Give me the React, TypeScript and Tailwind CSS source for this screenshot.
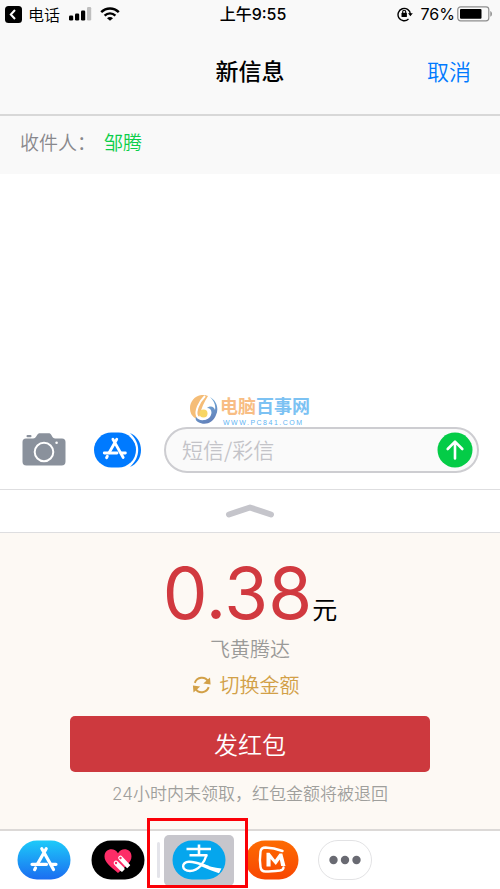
import type { ReactNode } from "react";

function SignalIcon() {
  return (
    <svg width="24" height="14" viewBox="0 0 24 14" aria-hidden="true">
      <rect x="1" y="8.500" width="4.200" height="5" rx="1.200" />
      <rect x="7" y="6.500" width="4.200" height="7" rx="1.200" />
      <rect x="13" y="3.500" width="4.200" height="10" rx="1.200" />
      <rect x="19" y="0" width="4.200" height="13.500" rx="1.200" fill="#bfbfbf" />
    </svg>
  );
}

function WifiIcon() {
  return (
    <svg width="20" height="14" viewBox="0 0 20 14" fill="none" stroke="#000" strokeWidth="2.4" aria-hidden="true">
      <path d="M1.2 5.2C6.2.2 13.8.2 18.8 5.2" />
      <path d="M4.6 8.6c3.1-3 7.700-3 10.800 0" />
      <path d="M7 11.200c1.800-1.700 4.200-1.700 6 0l-3 2.600z" fill="#000" stroke="none" />
    </svg>
  );
}

function RotationLockIcon() {
  return (
    <svg width="16" height="16" viewBox="0 0 16 16" fill="none" aria-hidden="true">
      <path d="M11.500 13.100A6.200 6.200 0 1 1 13.400 8" stroke="#000" strokeWidth="1.400" />
      <path d="M11 7.200h4.800L13.400 10.300z" fill="#000" />
      <rect x="4.500" y="6.800" width="5.400" height="4.200" rx=".6" fill="#000" />
      <path d="M5.700 7V5.800a1.500 1.500 0 0 1 3 0V7" stroke="#000" strokeWidth="1.100" />
    </svg>
  );
}

function BatteryIcon() {
  return (
    <svg width="36" height="16" viewBox="0 0 36 16" aria-hidden="true">
      <rect x=".8" y=".8" width="31" height="14" rx="2.800" fill="none" stroke="#8e8e8e" strokeWidth="1.200" />
      <rect x="3" y="3" width="21.500" height="9.800" rx="1" />
      <path d="M33.300 5c2.200.8 2.200 5 0 5.800z" fill="#8e8e8e" />
    </svg>
  );
}

function CameraIcon() {
  return (
    <svg width="44" height="34" viewBox="0 0 44 34" aria-hidden="true">
      <path
        d="M4 5.500h7c2 0 2.500-1 3.500-2.500C16 .8 16.500.3 18 .3h8.500c1.500 0 2.200.6 3.300 2.500 1 2 1.500 2.700 3.500 2.700H40c2.400 0 3.500 1.200 3.500 3.500V28.500c0 2.700-1.200 4-4 4H4.500c-2.800 0-4-1.300-4-4V9C.5 6.700 1.600 5.500 4 5.500z"
        fill="#8a919c"
      />
      <rect x="4.500" y="2" width="5" height="2.200" rx="1" fill="#8a919c" />
      <circle cx="22" cy="19" r="9.300" fill="none" stroke="#fff" strokeWidth="2" />
      <circle cx="34.600" cy="9.800" r="1.300" fill="#fff" />
    </svg>
  );
}

function AppStoreGlyph() {
  return (
    <g fill="none" stroke="#fff" strokeLinecap="round" strokeWidth="3.200">
      <path d="M11.800 1.200 14 5M16.200 1.200 7.500 16.500M14 5l9.500 17" />
      <path d="M2 16.800h14.500M21 16.800h5" />
      <path d="m5.500 20.500-.9 1.700" />
    </g>
  );
}

function MessageAppsIcon() {
  return (
    <svg width="48" height="36" viewBox="0 0 48 36" aria-hidden="true">
      <path d="M36 1c7 3 11 9.500 11 17s-4 14-11 17c11-10 11-24 0-34z" fill="#007aff" />
      <rect x="0" y="0" width="43" height="36" rx="18" fill="#fff" />
      <rect x="0" y=".5" width="42" height="35" rx="17.500" fill="#007aff" />
      <g transform="translate(8.500 6.200) scale(.88)">
        <AppStoreGlyph />
      </g>
    </svg>
  );
}

function SwitchIcon() {
  return (
    <svg width="20" height="18" viewBox="0 0 20 18" fill="none" aria-hidden="true">
      <path d="M2.800 6.800C5 .8 13 0 16 5.200M16.700 11.200C14.500 17.200 6.500 18 3.500 12.800" stroke="#d2a047" strokeWidth="2" />
      <path d="M11.300 7.400 18.600 8.600 18 1.600zM8.200 10.600.9 9.400l.6 7z" fill="#d2a047" />
    </svg>
  );
}

function AppStoreApp() {
  return (
    <svg width="54" height="40" viewBox="0 0 54 40" aria-hidden="true">
      <defs>
        <linearGradient id="store" x1="0" y1="0" x2="0" y2="1">
          <stop offset="0" stopColor="#1dcaf9" />
          <stop offset="1" stopColor="#1b6df1" />
        </linearGradient>
      </defs>
      <rect x=".5" y=".5" width="53" height="39" rx="19.500" fill="url(#store)" />
      <g transform="translate(13 7.500)">
        <AppStoreGlyph />
      </g>
    </svg>
  );
}

function DigitalTouchApp() {
  return (
    <svg width="54" height="40" viewBox="0 0 54 40" aria-hidden="true">
      <rect x=".5" y=".5" width="53" height="39" rx="19.500" />
      <path d="M27 33C20 27 13.500 22.500 13.500 16.500c0-8 10-9.500 13.500-3.300 3.500-6.200 13.500-4.700 13.500 3.300C40.500 22.500 34 27 27 33z" fill="#fd2d67" />
      <path d="m29.500 18 8 8.500M25 23l6.500 6.500" stroke="#fff" strokeWidth="4.600" strokeLinecap="round" />
      <path d="m35 29.500 5-5 3 3-5 5zM29.500 33.500l5-5 2 3-4 4z" fill="#000" />
      <circle cx="29.500" cy="18" r="1.200" fill="#fd2d67" />
      <circle cx="25" cy="23" r="1.200" fill="#fd2d67" />
    </svg>
  );
}

function AlipayApp() {
  return (
    <svg width="54" height="40" viewBox="0 0 54 40" aria-hidden="true">
      <defs>
        <clipPath id="alipay">
          <rect x=".5" y=".5" width="53" height="39" rx="19.500" />
        </clipPath>
      </defs>
      <g clipPath="url(#alipay)" fill="none" stroke="#fff">
        <rect width="54" height="40" fill="#05a6ed" stroke="none" />
        <path d="M14.500 9h24.500M17.500 15.200h18M27 4.500v11" strokeWidth="2.600" />
        <path d="M34.500 15C32.500 22.500 26.500 31 18 31c-9 0-9-9.200-1-9.200 7 0 13.500 3 19.500 5.200" strokeWidth="2.400" />
        <path d="M30 23.800c6 2.300 12 4 19.500 4.800L47 33.300C41 31.300 35 29 29 26.300z" fill="#fff" stroke="none" />
      </g>
    </svg>
  );
}

function MangoApp() {
  return (
    <svg width="54" height="40" viewBox="0 0 54 40" aria-hidden="true">
      <defs>
        <linearGradient id="mango" x1="0" y1="0" x2="0" y2="1">
          <stop offset="0" stopColor="#fd6b02" />
          <stop offset="1" stopColor="#f84702" />
        </linearGradient>
      </defs>
      <rect x=".5" y=".5" width="53" height="39" rx="19.500" fill="url(#mango)" />
      <path
        d="M37.500 11C32 9 26.500 7.800 20.500 7.500c-3 0-4.500 1-5 4-.8 6-.8 10.500 0 15.500.4 3 2 4.500 5 4.500 5 0 10-.5 14.500-1 2.500-.4 3.500-1.500 3.500-3"
        fill="none"
        stroke="#fff"
        strokeWidth="2.400"
        strokeLinecap="round"
      />
      <path d="M21.500 12.800h3l5.500 7 4.500-6.300h2.800L40.500 26h-4.300l-1.400-6.500-4 5.500-5.200-6v7.500h-4.100z" fill="#fff" />
    </svg>
  );
}

function MoreApp() {
  return (
    <svg width="54" height="40" viewBox="0 0 54 40" aria-hidden="true">
      <rect x=".5" y=".5" width="53" height="39" rx="19.500" fill="#fff" stroke="#e2e2e4" />
      <g fill="#696a72">
        <circle cx="15.500" cy="20" r="4.200" />
        <circle cx="27" cy="20" r="4.200" />
        <circle cx="38.500" cy="20" r="4.200" />
      </g>
    </svg>
  );
}

function Watermark() {
  return (
    <div className="absolute -top-[35px] left-[190px] flex items-center gap-[2px]">
      <svg width="28" height="30" viewBox="0 0 28 30" aria-hidden="true">
        <defs>
          <linearGradient id="ring" x1="0" y1="0" x2=".4" y2="1">
            <stop offset="0" stopColor="#75b9e4" />
            <stop offset="1" stopColor="#6382bb" />
          </linearGradient>
        </defs>
        <path d="M15 0C6-1 0 6 0 13c0 5 2 8 5 10 2 1 4 0 5-3 1-6 4-13 8-19z" fill="#f5bd77" />
        <path d="M20 2c7 4 9 12 6 18-3 8-11 11-18 7-2-1-3-3-2-5 3 3 9 4 13 1 4-4 3-10-2-10 4-3 7-1 8 2 1-5-1-9-5-13z" fill="url(#ring)" />
        <path d="M15 1C9 7 5 16 7 21c3 5 11 4 12-2 0-4-4-6-7-3" fill="none" stroke="#fff" strokeWidth="2" />
        <circle cx="13.500" cy="18.500" r="4" fill="#f8d662" />
      </svg>
      <div className="flex flex-col">
        <span className="text-[18px] leading-[27px] font-bold whitespace-nowrap text-[#7cc2f3]">
          <span className="text-[#f8bd84]">电脑</span>百事网
        </span>
        <span className="pl-[3px] font-['Liberation_Sans',sans-serif] text-[7px] leading-2 tracking-[1.5px] text-[#5fb4f3]">
          WWW.PC841.COM
        </span>
      </div>
    </div>
  );
}

function AppButton({ label, children }: { label: string; children: ReactNode }) {
  return (
    <button type="button" aria-label={label} className="block shrink-0">
      {children}
    </button>
  );
}

export default function App() {
  return (
    <div className="bg-white font-['Noto_Sans_CJK_SC',sans-serif] text-black">
      <header className="border-b-2 border-[#d8d8d8] bg-[#f9f9f9]">
        <div className="grid h-7 grid-cols-[1fr_auto_1fr] items-center pr-[7px] pl-[5px]">
          <div className="flex items-center">
            <button type="button" aria-label="返回电话" className="flex items-center gap-[6px]">
              <svg width="17" height="17" viewBox="0 0 17 17" aria-hidden="true">
                <rect width="17" height="17" rx="3.500" />
                <path d="M10 4 5.800 8.500 10 13" fill="none" stroke="#fff" strokeWidth="2" />
              </svg>
              <span className="text-[16px] leading-7 font-[350]">电话</span>
            </button>
            <div className="ml-2 flex items-center gap-2">
              <SignalIcon />
              <WifiIcon />
            </div>
          </div>
          <span className="ml-2 font-[Inter,'Noto_Sans_CJK_SC',sans-serif] text-[16px] leading-7 font-medium">
            上午9:55
          </span>
          <div className="flex items-center justify-end">
            <RotationLockIcon />
            <span className="mr-[2px] ml-2 font-[Inter,sans-serif] text-[16px]">76%</span>
            <BatteryIcon />
          </div>
        </div>
        <div className="grid h-[86px] grid-cols-[1fr_auto_1fr] items-center px-[29px] pb-[2px]">
          <h1 className="col-start-2 text-[23px] font-medium">新信息</h1>
          <button type="button" className="justify-self-end text-[22px] font-[350] text-[#007aff]">
            取消
          </button>
        </div>
      </header>

      <main>
        <div className="flex h-[58px] items-center bg-[#f9f9f9] px-5 pb-[6px] text-[19px] font-[350]">
          <span className="text-[#88888c]">收件人：</span>
          <span className="ml-2 text-[#0bce4a]">邹腾</span>
        </div>

        <div className="h-[253px]" />

        <form className="relative flex h-[46px] items-center pr-[21px] pl-[22px]" onSubmit={(e) => e.preventDefault()}>
          <Watermark />
          <button type="button" aria-label="相机">
            <CameraIcon />
          </button>
          <button type="button" aria-label="应用" className="ml-7">
            <MessageAppsIcon />
          </button>
          <div className="ml-[22px] flex h-[46px] min-w-0 flex-1 items-center rounded-full border-2 border-[#cdcdd1] bg-[#fafafa] pr-1 pl-4">
            <input
              type="text"
              aria-label="短信/彩信"
              placeholder="短信/彩信"
              className="min-w-0 flex-1 bg-transparent text-[21px] font-[350] outline-none placeholder:text-[#c3c3c8]"
            />
            <button type="submit" aria-label="发送">
              <svg width="36" height="36" viewBox="0 0 36 36" fill="none" aria-hidden="true">
                <circle cx="18" cy="18" r="17.500" fill="#04cc47" />
                <path d="M18 26.500V10M10.700 17 18 9.700l7.300 7.300" stroke="#fff" strokeWidth="2.600" strokeLinecap="round" strokeLinejoin="round" />
              </svg>
            </button>
          </div>
        </form>

        <button
          type="button"
          aria-label="展开"
          className="mt-4 flex h-11 w-full items-center justify-center border-y border-[#dedee0]"
        >
          <svg width="50" height="16" viewBox="0 0 50 16" fill="none" aria-hidden="true">
            <path d="M4 11.500 25 4.500l21 7" stroke="#c5c5cb" strokeWidth="6" strokeLinecap="round" strokeLinejoin="round" />
          </svg>
        </button>

        <section className="flex h-[296px] flex-col items-center bg-[#fdf9f4] px-[70px] pt-5">
          <p className="flex items-baseline">
            <span className="font-[Inter,sans-serif] text-[71px] leading-[80px] text-[#d1393f]">0.38</span>
            <span className="text-[25px] leading-8">元</span>
          </p>
          <p className="text-[20px] leading-8 font-[350] text-[#9a9a98]">飞黄腾达</p>
          <button type="button" className="mt-1 mr-[9px] flex items-center gap-2 text-[20px] leading-8 font-[350] text-[#d2a047]">
            <SwitchIcon />
            切换金额
          </button>
          <button type="button" className="mt-[15px] h-14 w-full rounded-[5px] bg-[#cd393e] text-[24px] font-[350] text-white">
            发红包
          </button>
          <p className="mt-2 font-[Inter,'Noto_Sans_CJK_SC',sans-serif] text-[17px] leading-7 font-[350] whitespace-nowrap text-[#9f9f9c]">
            24小时内未领取，红包金额将被退回
          </p>
        </section>
      </main>

      <nav aria-label="应用" className="flex h-[60px] items-center border-t-2 border-[#dcd9d7] pl-[17px]">
        <AppButton label="App Store">
          <AppStoreApp />
        </AppButton>
        <div className="ml-5">
          <AppButton label="Digital Touch">
            <DigitalTouchApp />
          </AppButton>
        </div>
        <div className="relative ml-3 flex items-center">
          <span className="h-9 w-[3px] rounded-full bg-[#e4e4ea]" />
          <div className="ml-1 flex h-[51px] w-[70px] items-center justify-center rounded-[5px] bg-[#c7c6cc]">
            <AppButton label="支付宝">
              <AlipayApp />
            </AppButton>
          </div>
          <div className="absolute -top-[17px] -left-[10px] z-10 h-[70px] w-[101px] border-[3px] border-[#fb0007]" />
        </div>
        <div className="ml-[11px]">
          <AppButton label="芒果TV">
            <MangoApp />
          </AppButton>
        </div>
        <div className="ml-[19px]">
          <AppButton label="更多">
            <MoreApp />
          </AppButton>
        </div>
      </nav>
    </div>
  );
}
